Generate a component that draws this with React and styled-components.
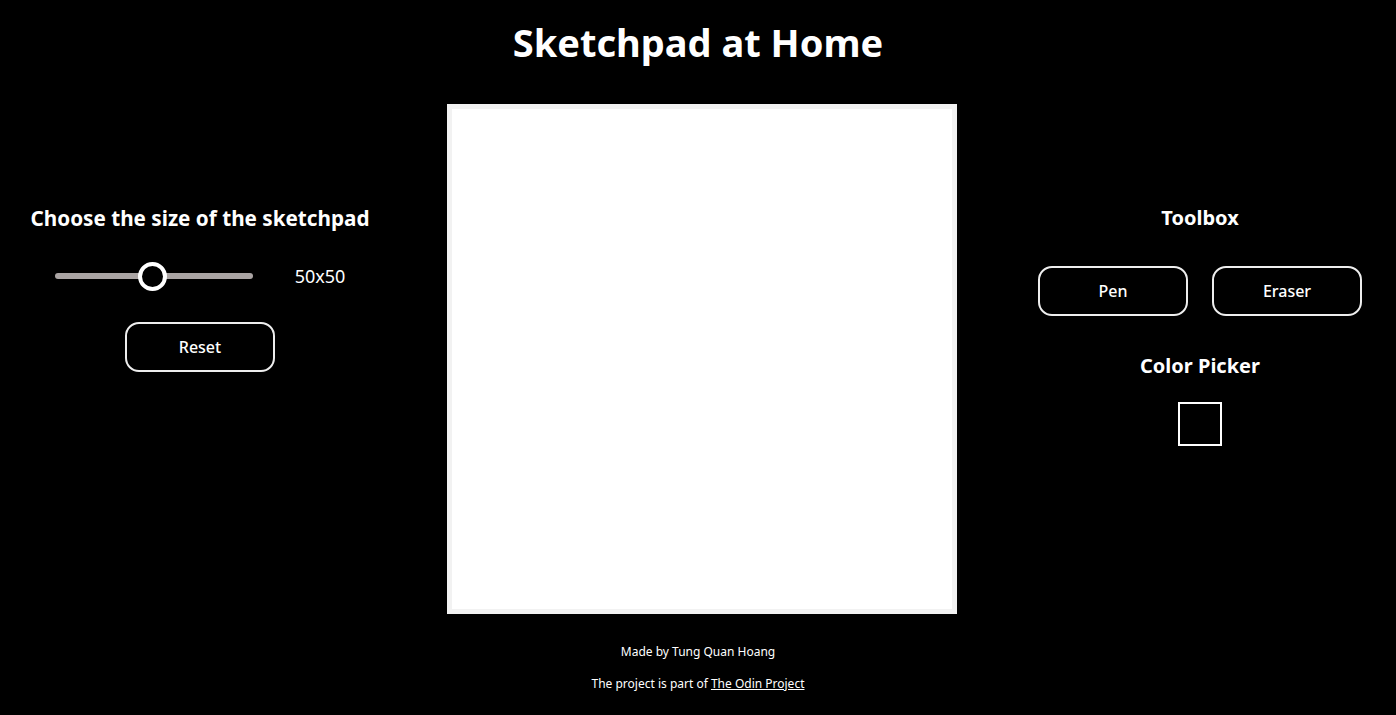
import React, { useState } from 'react';
import styled, { createGlobalStyle } from 'styled-components';

const Global = createGlobalStyle`
body {
    margin: 0;
    background: #000;
    color: #fff;
    font-family: "Noto Sans", "Open Sans", sans-serif;
}
`

const Page = styled.div`
display: flex;
flex-direction: column;
align-items: center;
`

const Title = styled.h1`
font-size: 38px;
font-weight: 700;
margin: 18px 0 38px;
line-height: 48px;
`

const Main = styled.main`
width: 100%;
display: grid;
grid-template-columns: 400px 510px 1fr;
column-gap: 47px;
`

const Panel = styled.section`
display: flex;
flex-direction: column;
align-items: center;
padding-top: 100px;
`

const Heading = styled.h2`
font-size: ${p => p.size || 20}px;
font-weight: 700;
margin: 0 0 ${p => p.gap || 20}px;
line-height: 28px;
`

const SliderRow = styled.div`
display: flex;
align-items: center;
gap: 42px;
`

const Range = styled.input`
-webkit-appearance: none;
appearance: none;
width: 198px;
height: 6px;
border-radius: 3px;
background: #aaa4a3;
outline: none;
margin: 0;
&::-webkit-slider-thumb {
    -webkit-appearance: none;
    width: 29px;
    height: 29px;
    border-radius: 50%;
    background: #000;
    border: 4px solid #fff;
    box-sizing: border-box;
}
`

const SizeLabel = styled.span`
font-size: 18px;
`

const Actions = styled.div`
margin-top: 34px;
`

const Button = styled.button`
width: 150px;
height: 50px;
background: #000;
color: #fff;
border: 2px solid #eee;
border-radius: 14px;
font-family: inherit;
font-size: 16px;
font-weight: 500;
cursor: pointer;
`

const Canvas = styled.div`
width: 500px;
height: 500px;
border: 5px solid #f2f2f2;
background: #fff;
display: grid;
grid-template-columns: repeat(${p => p.size}, 1fr);
`

const Tools = styled.div`
display: flex;
gap: 24px;
margin-bottom: 36px;
`

const Swatch = styled.input`
-webkit-appearance: none;
appearance: none;
width: 44px;
height: 44px;
padding: 0;
border: 2px solid #fff;
background: #000;
box-sizing: border-box;
cursor: pointer;
&::-webkit-color-swatch-wrapper { padding: 0; }
&::-webkit-color-swatch { border: none; }
`

const Footer = styled.footer`
font-size: 12px;
text-align: center;
margin-top: 29px;
p { margin: 0 0 14px; line-height: 18px; }
a { color: #fff; }
`

function App() {
    const [size, setSize] = useState(50);
    const [color, setColor] = useState('#000000');

    return (
        <Page>
            <Global />
            <Title>Sketchpad at Home</Title>
            <Main>
                <Panel>
                    <Heading size={20.7} gap={32}>Choose the size of the sketchpad</Heading>
                    <SliderRow>
                        <Range type="range" min="1" max="100" value={size} onChange={e => setSize(e.target.value)} />
                        <SizeLabel>{size}x{size}</SizeLabel>
                    </SliderRow>
                    <Actions>
                        <Button>Reset</Button>
                    </Actions>
                </Panel>
                <Canvas size={size} />
                <Panel>
                    <Heading gap={34}>Toolbox</Heading>
                    <Tools>
                        <Button>Pen</Button>
                        <Button>Eraser</Button>
                    </Tools>
                    <Heading gap={22}>Color Picker</Heading>
                    <Swatch type="color" value={color} onChange={e => setColor(e.target.value)} />
                </Panel>
            </Main>
            <Footer>
                <p>Made by Tung Quan Hoang</p>
                <p>The project is part of <a href="https://www.theodinproject.com/">The Odin Project</a></p>
            </Footer>
        </Page>
    )
}
export default App;
